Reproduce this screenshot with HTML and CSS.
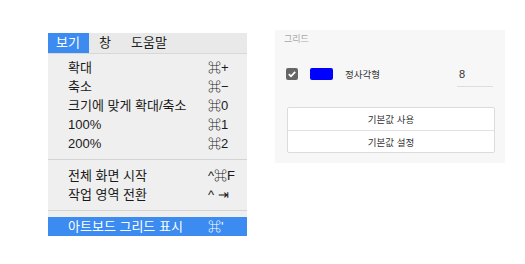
FILE: index.html
```html
<!DOCTYPE html>
<html lang="ko">
<head>
    <meta charset="UTF-8">
    <title>보기 메뉴</title>
    <link rel="stylesheet" href="styles.css">
</head>
<body>
    <div class="page">
        <div class="menu">
            <div class="menubar">
                <span class="bar-item active">보기</span>
                <span class="bar-item">창</span>
                <span class="bar-item">도움말</span>
            </div>
            <ul class="menu-list">
                <li class="item"><span>확대</span><span class="key">⌘+</span></li>
                <li class="item"><span>축소</span><span class="key">⌘−</span></li>
                <li class="item"><span>크기에 맞게 확대/축소</span><span class="key">⌘0</span></li>
                <li class="item"><span>100%</span><span class="key">⌘1</span></li>
                <li class="item"><span>200%</span><span class="key">⌘2</span></li>
                <li class="sep"></li>
                <li class="item"><span>전체 화면 시작</span><span class="key">^⌘F</span></li>
                <li class="item"><span>작업 영역 전환</span><span class="key">^ ⇥</span></li>
                <li class="sep"></li>
                <li class="item selected"><span>아트보드 그리드 표시</span><span class="key">⌘'</span></li>
            </ul>
        </div>

        <div class="panel">
            <div class="panel-title">그리드</div>
            <div class="grid-row">
                <span class="check">
                    <svg width="12" height="12" viewBox="0 0 12 12">
                        <path d="M2.8 6.2 L5 8.3 L9.2 3.8" fill="none" stroke="#fff" stroke-width="1.8"/>
                    </svg>
                </span>
                <span class="swatch"></span>
                <span class="grid-name">정사각형</span>
                <span class="grid-size">8</span>
            </div>
            <div class="btn-group">
                <button class="btn">기본값 사용</button>
                <button class="btn">기본값 설정</button>
            </div>
        </div>
    </div>
</body>
</html>
```

FILE: styles.css
```css
body {
    margin: 0;
    background-color: #fff;
    font-family: "Liberation Sans", "Noto Sans CJK KR", sans-serif;
}
.page {
    display: flex;
    align-items: flex-start;
    padding: 30px 0 0 48px;
}

/* menu */
.menu {
    width: 199px;
    margin-top: 3px;
    background-color: #efefef;
}
.menubar {
    display: flex;
    height: 20px;
    background-color: #e9e9e9;
    border-bottom: 1px solid #d8d8d8;
    font-size: 13px;
    line-height: 20px;
    color: #222;
}
.bar-item {
    padding: 0 10px;
}
.bar-item.active {
    width: 24px;
    padding: 0 9px 0 8px;
    background-color: #3b8bf0;
    color: #fff;
}
.menu-list {
    list-style: none;
    margin: 0;
    padding: 4px 0 0;
}
.item {
    display: flex;
    justify-content: space-between;
    height: 19px;
    padding: 0 13px 0 20px;
    font-size: 13px;
    line-height: 19px;
    color: #1a1a1a;
}
.key {
    width: 26px;
    text-align: left;
}
.item.selected {
    background-color: #3b8bf0;
    color: #fff;
    margin-top: 1px;
}
.sep {
    height: 1px;
    margin: 6px 0;
    background-color: #d4d4d4;
}

/* grid panel */
.panel {
    width: 230px;
    height: 133px;
    margin-left: 28px;
    background-color: #f7f7f7;
    font-size: 9px;
}
.panel-title {
    padding: 3px 0 0 9px;
    color: #a8a8a8;
    line-height: 12px;
}
.grid-row {
    display: flex;
    align-items: center;
    height: 20px;
    margin: 19px 0 0 11px;
    color: #333;
}
.check {
    display: flex;
    width: 12px;
    height: 12px;
    border-radius: 2px;
    background-color: #666;
}
.swatch {
    width: 23px;
    height: 12px;
    margin-left: 12px;
    border-radius: 2px;
    background-color: #0000ff;
}
.grid-name {
    margin-left: 12px;
    width: 112px;
    font-size: 9.5px;
}
.grid-size {
    width: 34px;
    height: 21px;
    line-height: 18px;
    font-size: 11px;
    margin-top: 4px;
    padding-left: 2px;
    border-bottom: 1px solid #ddd;
}
.btn-group {
    display: flex;
    flex-direction: column;
    width: 206px;
    margin: 23px 0 0 12px;
    border: 1px solid #dcdcdc;
    border-radius: 2px;
    background-color: #fff;
}
.btn {
    height: 22px;
    padding: 0;
    border: none;
    background: none;
    font-family: "Liberation Sans", "Noto Sans CJK KR", sans-serif;
    font-size: 9.5px;
    color: #333;
}
.btn + .btn {
    border-top: 1px solid #e2e2e2;
}
```
